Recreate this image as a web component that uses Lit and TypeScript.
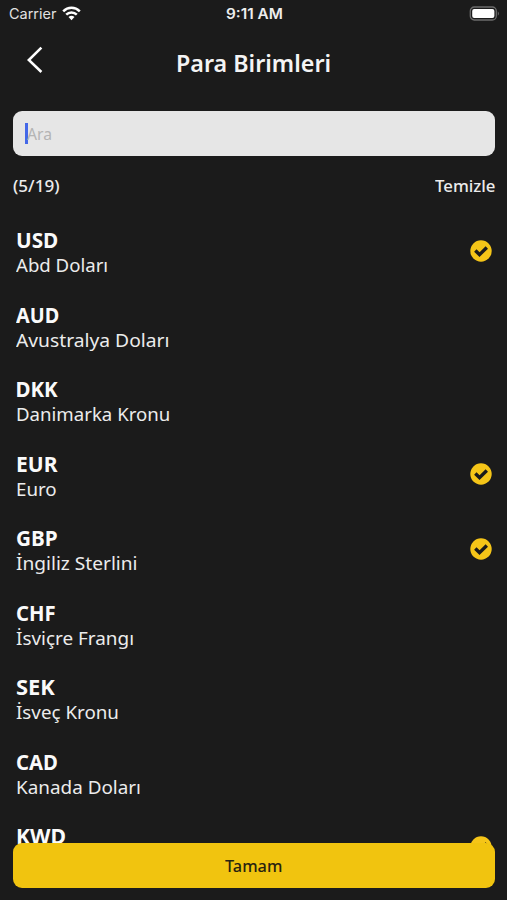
import { LitElement, html, css, svg } from "lit";
import { customElement, property } from "lit/decorators.js";

interface Currency {
  code: string;
  codeWidth: number;
  name: string;
  nameWidth: number;
  selected?: boolean;
}

const CURRENCIES: Currency[] = [
  { code: "USD", codeWidth: 42.5, name: "Abd Doları", nameWidth: 92.5, selected: true },
  { code: "AUD", codeWidth: 43.5, name: "Avustralya Doları", nameWidth: 154 },
  { code: "DKK", codeWidth: 42, name: "Danimarka Kronu", nameWidth: 154 },
  { code: "EUR", codeWidth: 41, name: "Euro", nameWidth: 40.5, selected: true },
  { code: "GBP", codeWidth: 41.5, name: "İngiliz Sterlini", nameWidth: 122, selected: true },
  { code: "CHF", codeWidth: 39.5, name: "İsviçre Frangı", nameWidth: 118.5 },
  { code: "SEK", codeWidth: 38.5, name: "İsveç Kronu", nameWidth: 102.5 },
  { code: "CAD", codeWidth: 41.5, name: "Kanada Doları", nameWidth: 124.5 },
  { code: "KWD", codeWidth: 49.5, name: "Kuveyt Dinarı", nameWidth: 122, selected: true },
];

/** Single-line text stretched horizontally to a given measure. */
@customElement("fitted-text")
class FittedText extends LitElement {
  @property({ type: Number }) measure = 0;
  @property() text = "";

  static styles = css`
    :host { display: block; white-space: nowrap; }
    .label { display: inline-block; transform-origin: 0 50%; }
  `;

  render() {
    return html`<span class="label">${this.text}</span>`;
  }

  updated() {
    const label = this.renderRoot.querySelector<HTMLElement>(".label")!;
    this.style.width = `${this.measure}px`;
    label.style.transform = `scaleX(${this.measure / label.offsetWidth})`;
  }
}

@customElement("app-root")
class AppRoot extends LitElement {
  static styles = css`
    :host {
      display: flex;
      flex-direction: column;
      width: 507px;
      height: 900px;
      overflow: hidden;
      position: relative;
      box-sizing: border-box;
      background: #1b1b1b;
      color: #f4f4f4;
      font-family: "Noto Sans", sans-serif;
    }
    .status {
      display: grid;
      grid-template-columns: 1fr auto 1fr;
      align-items: center;
      height: 27px;
      padding: 0 7px 0 9px;
      flex: none;
      font-family: Inter, "Liberation Sans", sans-serif;
      font-size: 14px;
      color: #e2e2e2;
    }
    .carrier { display: flex; align-items: center; gap: 5px; }
    .time { font-weight: 600; font-size: 14px; color: #ededed; }
    .battery { justify-self: end; }
    svg { display: block; }
    .header {
      display: grid;
      grid-template-columns: 60px 1fr 60px;
      align-items: center;
      height: 72px;
      flex: none;
    }
    .back { padding: 0 0 7px 27px; }
    .title { justify-self: center; font-size: 23.5px; font-weight: 600; }
    .search {
      display: flex;
      align-items: center;
      height: 45px;
      margin: 12px 12.5px 0 13px;
      padding-left: 12px;
      box-sizing: border-box;
      flex: none;
      border-radius: 9px;
      background: #e6e6e6;
      color: #b4b4b4;
      font-size: 16px;
    }
    .caret { width: 2.5px; height: 21px; margin-right: -1px; background: #4468e8; }
    .summary {
      display: flex;
      justify-content: space-between;
      align-items: center;
      height: 24px;
      margin: 17px 12.5px 0 13px;
      flex: none;
      font-size: 16.5px;
      font-weight: 500;
      color: #ececec;
    }
    .list { flex: 1; min-height: 0; margin-top: 16.5px; overflow: hidden; }
    .row {
      display: flex;
      justify-content: space-between;
      align-items: center;
      height: 74.5px;
      padding: 0 15px 0 15.5px;
    }
    .entry { display: flex; flex-direction: column; padding-top: 5px; }
    .code { font-size: 20.5px; line-height: 25px; font-weight: 700; color: #fafafa; }
    .name { font-size: 18.5px; line-height: 25px; margin-top: -1px; padding-bottom: 1px; color: #ececec; }
    .confirm {
      position: absolute;
      left: 13px;
      right: 12.5px;
      top: 842.5px;
      height: 45px;
      display: flex;
      align-items: center;
      justify-content: center;
      border-radius: 9px;
      background: #f1c40f;
      color: #29230f;
      font-size: 17px;
      font-weight: 500;
    }
  `;

  private check() {
    return svg`<svg width="22" height="22" viewBox="0 0 22 22">
      <circle cx="11" cy="11" r="10.7" fill="#f5c518"/>
      <path d="M5.3 10.6 9.5 14.6 16.8 7.5" fill="none" stroke="#1b1b1b" stroke-width="3.4"/>
    </svg>`;
  }

  render() {
    return html`
      <div class="status">
        <div class="carrier">
          <fitted-text text="Carrier" measure="47.5"></fitted-text>
          <svg width="19" height="15" viewBox="0 0 19 15" fill="none" stroke="#fff" stroke-width="2.5">
            <path d="M1.2 5.3C5.8.7 13.2.7 17.8 5.3"/>
            <path d="M4.2 8.6C7.1 5.7 11.9 5.7 14.8 8.6"/>
            <path d="M9.5 14.2 6.5 11.1Q9.5 8.5 12.5 11.1Z" fill="#fff" stroke="none"/>
          </svg>
        </div>
        <fitted-text class="time" text="9:11 AM" measure="57"></fitted-text>
        <svg class="battery" width="31" height="15" viewBox="0 0 31 15">
          <rect x="1.3" y="1" width="26" height="13" rx="4" fill="none" stroke="#6c6c6c" stroke-width="1.3"/>
          <rect x="3.2" y="3" width="22.2" height="9" rx="2" fill="#fff"/>
          <path d="M28.8 5.2Q30.8 7.5 28.8 9.8Z" fill="#747474"/>
        </svg>
      </div>
      <div class="header">
        <svg class="back" width="16" height="27" viewBox="0 0 16 27">
          <path d="M14.4 1.6 1.8 14 14.4 26" fill="none" stroke="#fff" stroke-width="2.6"/>
        </svg>
        <fitted-text class="title" text="Para Birimleri" measure="155.5"></fitted-text>
      </div>
      <div class="search">
        <span class="caret"></span>
        <fitted-text text="Ara" measure="25.5"></fitted-text>
      </div>
      <div class="summary">
        <fitted-text text="(5/19)" measure="46.5"></fitted-text>
        <fitted-text text="Temizle" measure="60"></fitted-text>
      </div>
      <div class="list">
        ${CURRENCIES.map(
          (c) => html`<div class="row">
            <div class="entry">
              <fitted-text class="code" .text=${c.code} .measure=${c.codeWidth}></fitted-text>
              <fitted-text class="name" .text=${c.name} .measure=${c.nameWidth}></fitted-text>
            </div>
            ${c.selected ? this.check() : ""}
          </div>`
        )}
      </div>
      <div class="confirm"><fitted-text text="Tamam" measure="57.5"></fitted-text></div>
    `;
  }
}
